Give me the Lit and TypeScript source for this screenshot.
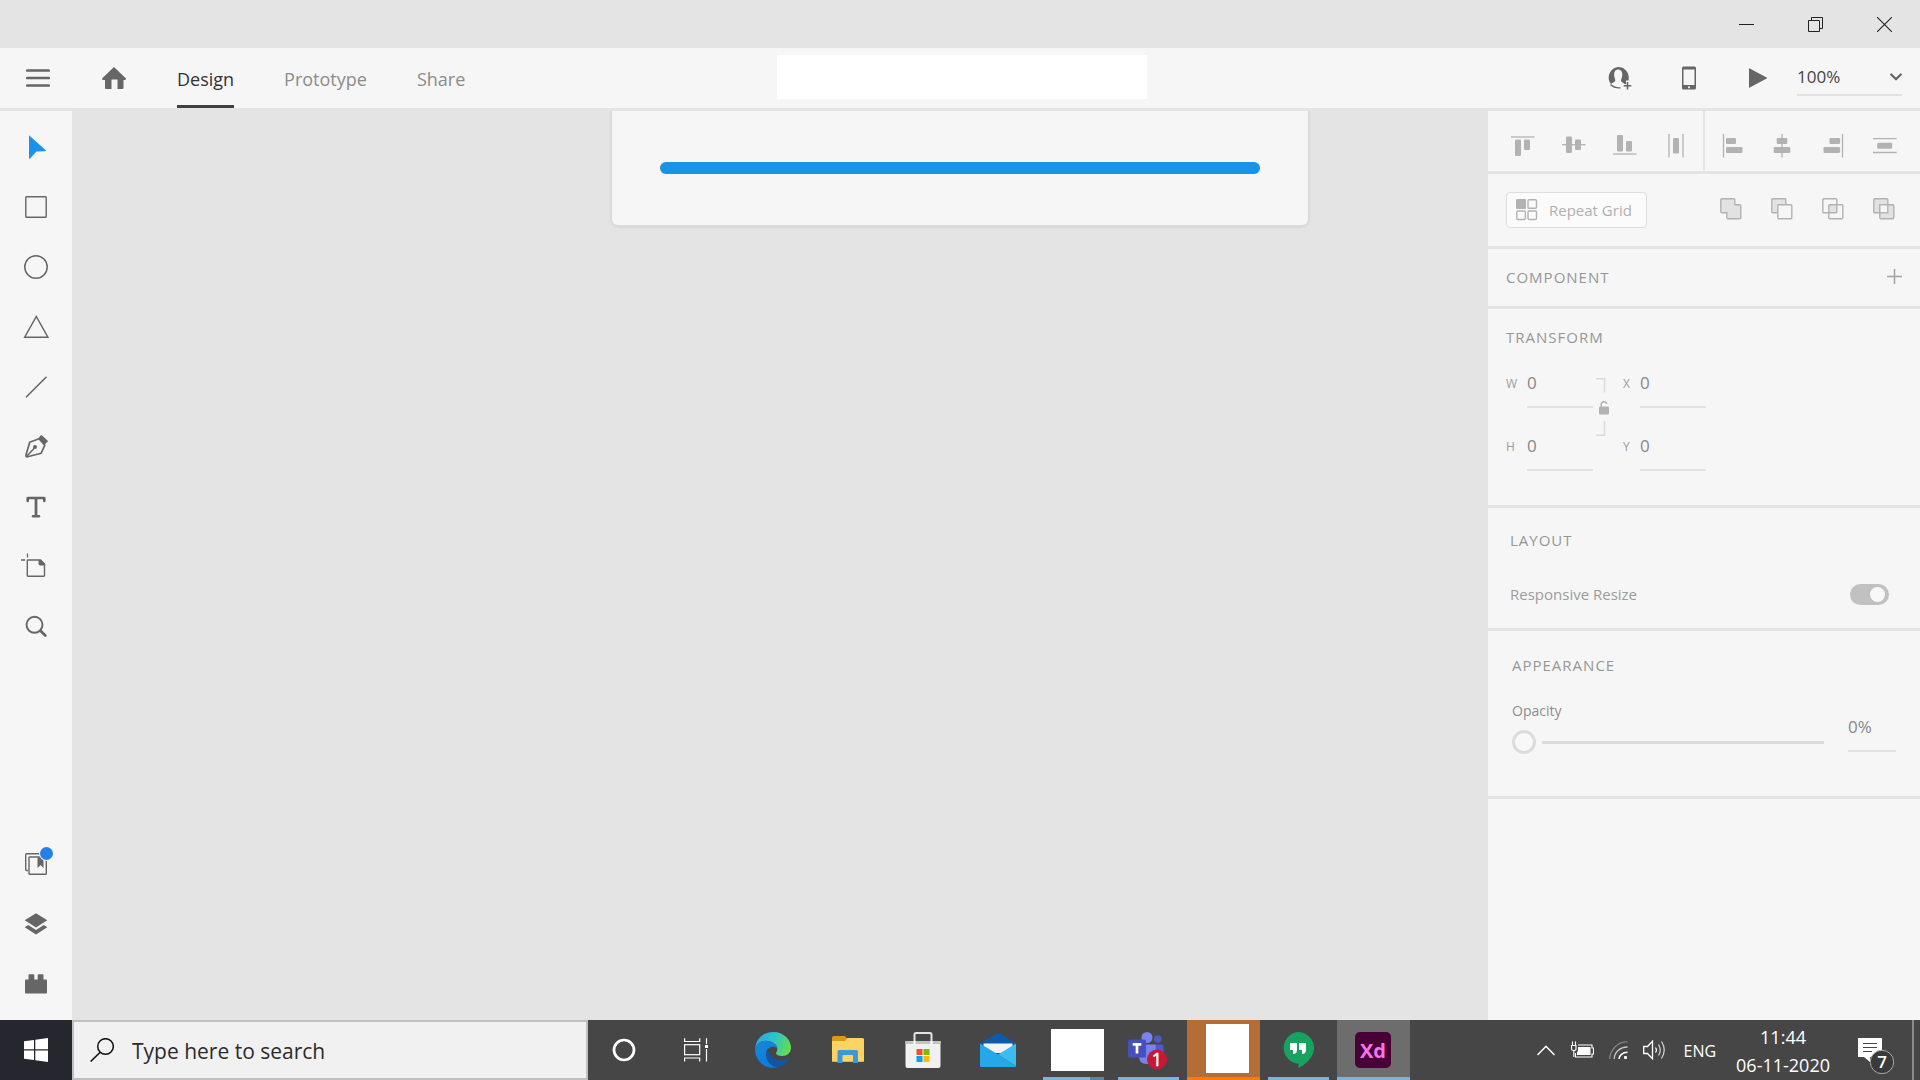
import { LitElement, html, css, svg, nothing } from "lit";
import type { TemplateResult, SVGTemplateResult } from "lit";
import { customElement, property, state } from "lit/decorators.js";
import { classMap } from "lit/directives/class-map.js";

const icon = (w: number, h: number, body: SVGTemplateResult): TemplateResult =>
  html`<svg width=${w} height=${h} viewBox="0 0 ${w} ${h}" fill="none" aria-hidden="true">${body}</svg>`;

const INK = "#666666";
const DIM = "#b2b2b2";

/* ---------- window and header ---------- */
const minimise = icon(15, 15, svg`<path d="M0 7.5H15" stroke="#222"/>`);
const restore = icon(15, 15, svg`<path d="M.5 3.5h11v11H.5zM3.500 3.500V.5h11v11h-3" stroke="#222"/>`);
const close = icon(15, 15, svg`<path d="M0 0L15 15M15 0L0 15" stroke="#222" stroke-width="1.1"/>`);
const menu = icon(24, 18, svg`<path d="M1.300 1.500H22.700M1.300 9H22.700M1.300 16.500H22.700" stroke=${INK} stroke-width="2.700" stroke-linecap="round"/>`);
const home = icon(24, 22, svg`<path d="M12 0L24 11.500Q24 13 22.500 13H21.500V21Q21.500 22 20.500 22H15.500V12.500H9.500V22H4Q3 22 3 21V13H1.500Q0 13 0 11.500Z" fill=${INK}/>`);
const invite = icon(26, 24, svg`
  <path d="M11 1A10.500 10.500 0 0 1 21.700 12V14.500H19V18H17.500C16 16.500 14 15.800 14 14.500C14 13 15.300 11.800 15.300 8.300C15.300 5.200 13.600 3.600 11.200 3.600S7.100 5.200 7.100 8.300C7.100 11.800 8.300 13 8.300 14.500C8.300 16 5.500 16.500 4 18A10.500 10.500 0 0 1 11 1Z" fill=${INK}/>
  <path d="M3.500 18.500Q7 22.200 13.500 21.800" stroke=${INK} stroke-width="1.300"/>
  <path d="M20.500 16V23.500M16.700 19.700H24.300" stroke=${INK} stroke-width="1.600"/>`);
const phone = icon(14, 24, svg`<path fill-rule="evenodd" d="M1.500 .5H12.500Q14 .5 14 2V22Q14 23.500 12.500 23.500H1.500Q0 23.500 0 22V2Q0 .5 1.500 .5ZM1.500 3.500V19H12.500V3.500ZM7 20.200A1.100 1.100 0 1 0 7 22.400A1.100 1.100 0 1 0 7 20.200Z" fill=${INK}/>`);
const play = icon(18, 20, svg`<path d="M0 .8Q0 0 .8 .4L17.600 9.500Q18.300 10 17.600 10.500L.8 19.600Q0 20 0 19.200Z" fill=${INK}/>`);
const chevron = icon(12, 8, svg`<path d="M1.300 1.500L6 6.200L10.700 1.500" stroke=${INK} stroke-width="2.300" stroke-linecap="round" stroke-linejoin="round"/>`);

/* ---------- tool rail ---------- */
const tools: [string, TemplateResult][] = [
  ["Select", icon(24, 24, svg`<path d="M5 .3L22 15.500Q22 16 21 16.200L12.500 16.500L6 23.600Q5 24.200 5 23.200Z" fill="#1a93e8"/>`)],
  ["Rectangle", icon(24, 24, svg`<rect x="1.800" y="1.800" width="20.400" height="20.400" rx=".8" stroke=${INK} stroke-width="1.400"/>`)],
  ["Ellipse", icon(24, 24, svg`<circle cx="12" cy="12" r="11.200" stroke=${INK} stroke-width="1.500"/>`)],
  ["Polygon", icon(26, 24, svg`<path d="M13.300 1.500L24.900 22.200H1.700Z" stroke=${INK} stroke-width="1.500"/>`)],
  ["Line", icon(22, 22, svg`<path d="M1.500 20.800L21 1.300" stroke=${INK} stroke-width="1.600" stroke-linecap="round"/>`)],
  ["Pen", icon(24, 24, svg`
    <path d="M5.700 7.200L15 3.700L20.800 10.200L17.200 18.200L3.500 21.800Q1.500 22 2 20Z" stroke=${INK} stroke-width="1.700" stroke-linejoin="round"/>
    <path d="M2.500 21.500L10.500 13" stroke=${INK} stroke-width="1.500"/>
    <circle cx="11" cy="12" r="2" fill=${INK}/>
    <path d="M14.300 3.500L16.500 .5Q17.200 -.2 18.100 .5L23.500 5.500Q24.200 6.300 23.300 7L20.500 9.800Z" fill=${INK}/>`)],
  ["Text", icon(20, 24, svg`<path d="M1.700 6V3H18.300V6" stroke=${INK} stroke-width="2.600" stroke-linecap="round" stroke-linejoin="round"/><path d="M10 3V21" stroke=${INK} stroke-width="2.800"/><path d="M7 21.300H13" stroke=${INK} stroke-width="2.400" stroke-linecap="round"/>`)],
  ["Artboard", icon(30, 28, svg`
    <path d="M7 7H19.500L23.500 11V22.500Q23.500 23.200 22.700 23.200H7Q6.300 23.200 6.300 22.500V7.700Q6.300 7 7 7Z" stroke=${INK} stroke-width="1.400"/>
    <path d="M17.500 7H20L24 11V12.500H19.500Q17.500 12.500 17.500 10.500Z" fill=${INK}/>
    <path d="M6.500 .5V4.500M0 7H4.200" stroke=${INK} stroke-width="1.300"/>`)],
  ["Zoom", icon(22, 24, svg`<circle cx="9.500" cy="9.800" r="8" stroke=${INK} stroke-width="1.900"/><path d="M15.500 15.700L20.300 20.500" stroke=${INK} stroke-width="2.700" stroke-linecap="round"/>`)],
];
const libraries = icon(24, 24, svg`
  <path d="M4 18.500H2.800Q1.700 18.500 1.700 17.500V2.500Q1.700 1.700 2.500 1.700H18.500" stroke=${INK} stroke-width="1.400"/>
  <rect x="5" y="5" width="17.300" height="17.300" rx=".8" stroke=${INK} stroke-width="1.400"/>
  <path d="M13.500 5.500H19.500V16L16.500 13L13.500 16Z" fill=${INK}/>`);
const layers = icon(24, 22, svg`
  <path d="M12 .3L23.300 7.300L12 14.400L.7 7.300Z" fill=${INK}/>
  <path d="M.7 14.200L4.200 12L12 16.900L19.800 12L23.300 14.200L12 21.500Z" fill=${INK}/>`);
const plugins = icon(22, 20, svg`<path d="M3.500 5.500V1Q3.500 .3 4.300 .3H8.500Q9.300 .3 9.300 1V5.500H12.700V1Q12.700 .3 13.500 .3H17.700Q18.500 .3 18.500 1V5.500H21Q22 5.500 22 6.500V18.500Q22 19.500 21 19.500H1Q0 19.500 0 18.500V6.500Q0 5.500 1 5.500Z" fill=${INK}/>`);

/* ---------- property panel ---------- */
const alignVertical: [string, TemplateResult][] = [
  ["Align top", icon(24, 24, svg`<path d="M0 3H23.500" stroke=${DIM} stroke-width="1.300"/><rect x="4" y="5.500" width="6" height="16.500" rx="1.300" fill=${DIM}/><rect x="13" y="5.500" width="6" height="10.500" rx="1.300" fill=${DIM}/>`)],
  ["Align middle", icon(24, 24, svg`<path d="M0 10.700H23.500" stroke=${DIM} stroke-width="1.300"/><rect x="4" y="2.500" width="6" height="16.500" rx="1.300" fill=${DIM}/><rect x="13" y="5.500" width="6" height="10.500" rx="1.300" fill=${DIM}/>`)],
  ["Align bottom", icon(24, 24, svg`<path d="M0 20H23.500" stroke=${DIM} stroke-width="1.300"/><rect x="4" y="1" width="6" height="16.500" rx="1.300" fill=${DIM}/><rect x="13" y="7" width="6" height="10.500" rx="1.300" fill=${DIM}/>`)],
  ["Distribute horizontally", icon(24, 24, svg`<path d="M5 0V23.500M19 0V23.500" stroke=${DIM} stroke-width="1.300"/><rect x="9" y="4" width="6" height="15.500" rx="1.300" fill=${DIM}/>`)],
];
const alignHorizontal: [string, TemplateResult][] = [
  ["Align left", icon(24, 24, svg`<path d="M3.500 0V23.500" stroke=${DIM} stroke-width="1.300"/><rect x="6" y="4" width="10" height="6" rx="1.300" fill=${DIM}/><rect x="6" y="13" width="16.500" height="6" rx="1.300" fill=${DIM}/>`)],
  ["Align centre", icon(24, 24, svg`<path d="M11 0V23.500" stroke=${DIM} stroke-width="1.300"/><rect x="5.700" y="4" width="10.600" height="6" rx="1.300" fill=${DIM}/><rect x="2.700" y="13" width="16.600" height="6" rx="1.300" fill=${DIM}/>`)],
  ["Align right", icon(24, 24, svg`<path d="M20.500 0V23.500" stroke=${DIM} stroke-width="1.300"/><rect x="7.500" y="4" width="10.600" height="6" rx="1.300" fill=${DIM}/><rect x="1.500" y="13" width="16.600" height="6" rx="1.300" fill=${DIM}/>`)],
  ["Distribute vertically", icon(24, 24, svg`<path d="M0 4.700H23.700M0 18.500H23.700" stroke=${DIM} stroke-width="1.300"/><rect x="4.200" y="8.700" width="15" height="6" rx="1.300" fill=${DIM}/>`)],
];
const SQ_A = svg`<rect x=".8" y=".8" width="14" height="14" rx="1"/>`;
const SQ_B = svg`<rect x="6.800" y="6.800" width="14" height="14" rx="1"/>`;
const booleans: [string, TemplateResult][] = [
  ["Add", icon(22, 22, svg`<path d="M1.800 .8H13.800Q14.800 .8 14.800 1.800V6.800H19.800Q20.800 6.800 20.800 7.800V19.800Q20.800 20.800 19.800 20.800H7.800Q6.800 20.800 6.800 19.800V14.800H1.800Q.8 14.800 .8 13.800V1.800Q.8 .8 1.800 .8Z" fill="#e2e2e2" stroke=${DIM} stroke-width="1.400"/>`)],
  ["Subtract", icon(22, 22, svg`<g stroke=${DIM} stroke-width="1.400"><g fill="#e2e2e2">${SQ_A}</g><g fill="#f6f6f6">${SQ_B}</g></g>`)],
  ["Intersect", icon(22, 22, svg`<rect x="6.800" y="6.800" width="8" height="8" fill="#e2e2e2"/><g stroke=${DIM} stroke-width="1.400">${SQ_A}${SQ_B}</g>`)],
  ["Exclude overlap", icon(22, 22, svg`<g stroke=${DIM} stroke-width="1.400" fill="#e2e2e2">${SQ_A}${SQ_B}<rect x="6.800" y="6.800" width="8" height="8" fill="#f6f6f6"/></g>`)],
];
const repeatGrid = icon(22, 22, svg`<rect width="10" height="10" rx="1" fill=${DIM}/><g stroke=${DIM} stroke-width="1.400"><rect x="12" y=".8" width="8.500" height="8.500" rx="1"/><rect x=".8" y="12" width="8.500" height="8.500" rx="1"/><rect x="12" y="12" width="8.500" height="8.500" rx="1"/></g>`);
const plus = icon(15, 15, svg`<path d="M7.500 0V15M0 7.500H15" stroke="#a2a2a2" stroke-width="1.500"/>`);
const lock = icon(14, 58, svg`
  <path d="M0 .8H8.500V14.500M0 57.200H8.500V43" stroke="#dcdcdc" stroke-width="1.500"/>
  <rect x="3" y="28.500" width="10" height="8" rx="1" fill="#b2b2b2"/>
  <path d="M5.200 29V26.500Q5.200 23.700 8 23.700Q10.500 23.700 10.800 26" stroke="#b2b2b2" stroke-width="1.400"/>`);

/* ---------- taskbar ---------- */
const windowsLogo = icon(24, 24, svg`<path d="M0 3.300L10 1.900V11.300H0ZM11.300 1.700L24 0V11.300H11.300ZM0 12.600H10V22.100L0 20.700ZM11.300 12.600H24V24L11.300 22.300Z" fill="#fff"/>`);
const magnifier = icon(24, 24, svg`<circle cx="15.500" cy="8.500" r="7.800" stroke="#111" stroke-width="1.500"/><path d="M10.200 14.200L.6 23.500" stroke="#111" stroke-width="1.600"/>`);
const cortana = icon(24, 24, svg`<circle cx="12" cy="12" r="10" stroke="#fff" stroke-width="2.700"/>`);
const taskView = icon(24, 24, svg`<g stroke="#fff" stroke-width="1.200"><path d="M.6 .3V3.500H15.700V.3M.6 23.500V20H15.700V23.500M22.500 .3V6M22.500 11V23.500"/><rect x=".6" y="6.700" width="15.100" height="10"/></g><rect x="21" y="7" width="3" height="3" fill="#fff"/>`);
const edge = icon(36, 36, svg`
  <defs>
    <linearGradient id="e1" x1="0" y1=".2" x2="1" y2=".5"><stop offset="0" stop-color="#27a9e8"/><stop offset=".5" stop-color="#2fc3c9"/><stop offset="1" stop-color="#62dc52"/></linearGradient>
    <linearGradient id="e2" x1="0" y1="0" x2=".6" y2="1"><stop offset="0" stop-color="#1a86d8"/><stop offset="1" stop-color="#0a7ddb"/></linearGradient>
  </defs>
  <path d="M.3 15.500C1.500 6 9 0 18 0C29 0 36 8 36 15.500C36 21 32 24 27.500 24C23.500 24 21 22.700 21 21.300C21 20.300 22.300 19.500 22.300 17C22.300 12.500 17 8.800 10.500 8.800C5.500 8.800 2 11.500 .3 15.500Z" fill="url(#e1)"/>
  <path d="M.3 15.500C2 11.500 5.500 8.800 10.500 8.800C17 8.800 22.300 12.500 22.300 16.500C20 13.500 13 14 11.500 20C10 27 15 34 22.500 35.400C10 38 -1.500 28 .3 15.500Z" fill="url(#e2)"/>
  <path d="M12.800 16.500C8.500 23 13 34 22.500 35.400C28 34 31.500 31 33.700 27.200C34 26.600 33.500 26.300 33 26.600C26 30.500 14 28 12.800 16.500Z" fill="#1155a5"/>`);
const explorer = icon(32, 28, svg`
  <path d="M0 2Q0 0 2 0H13L15.500 3H30Q32 3 32 5V26H0Z" fill="#d99b12"/>
  <path d="M0 5H13L15.500 2H30.500Q32 2 32 3.500V24Q32 25.500 30.500 25.500H1.500Q0 25.500 0 24Z" fill="#fdd464"/>
  <path d="M5.500 15.500Q5.500 14 7 14H24.500Q26 14 26 15.500V27H21V20Q21 19 20 19H11.500Q10.500 19 10.500 20V27H5.500Z" fill="#3f96d9"/>`);
const store = icon(36, 36, svg`
  <path d="M9.500 12V2.500Q9.500 1 11 1H25Q26.500 1 26.500 2.500V12" stroke="#e4e4e4" stroke-width="2"/>
  <path d="M.5 9H35.500V34Q35.500 36 33.500 36H2.500Q.5 36 .5 34Z" fill="#f1f1f1"/><path d="M.5 9H35.500V12H.5Z" fill="#c4c4c4"/>
  <path d="M9.500 9V12M26.500 9V12" stroke="#fff" stroke-width="2"/>
  <rect x="11.500" y="17" width="6" height="6" fill="#f25022"/><rect x="18.500" y="17" width="6" height="6" fill="#7fba00"/><rect x="11.500" y="24" width="6" height="6" fill="#00a4ef"/><rect x="18.500" y="24" width="6" height="6" fill="#ffb900"/>`);
const mail = icon(36, 34, svg`
  <path d="M0 10.500L16.500 .6Q18 -.2 19.500 .6L36 10.500L18 22Z" fill="#0b5cad"/>
  <path d="M3.500 10.500H32.500V20H3.500Z" fill="#f4f4f4"/>
  <path d="M0 10.500L18 21.500L36 33Q36 34 35 34H1.500Q0 34 0 32.500Z" fill="#25a8e8"/>
  <path d="M36 10.500L18 21.500L36 33Z" fill="#3dbcf2"/>`);
const teams = icon(40, 40, svg`
  <circle cx="19" cy="7.500" r="5.500" fill="#7b83eb"/><circle cx="29.800" cy="9" r="3.800" fill="#5059c9"/>
  <path d="M25 14.500H34Q35.500 14.500 35.500 16V24Q35 30 29 30L25 28Z" fill="#5059c9"/>
  <path d="M11 14.500H27.500V25Q27.500 34 19 34T11 25Z" fill="#7b83eb"/>
  <rect y="9.500" width="18" height="18" rx="1.500" fill="#4550bd"/>
  <path d="M4.700 14.300H13.300M9 14V23.500" stroke="#fff" stroke-width="2.700"/>
  <circle cx="29" cy="29.500" r="10" fill="#c8183a"/>
  <text x="29" y="36" text-anchor="middle" font-family="Open Sans, sans-serif" font-size="18" fill="#fff" stroke="#fff" stroke-width=".5">1</text>`);
const hangouts = icon(32, 36, svg`
  <path d="M16 0A16 16 0 0 1 32 16C32 24 25 32 16.500 36V31.500A15.800 15.800 0 0 1 16 0Z" fill="#17a35f"/>
  <path d="M8 11H15V18Q15 22 11 22V18H8ZM17 11H24V18Q24 22 20 22V18H17Z" fill="#fff"/>`);
const xd = icon(36, 36, svg`<rect width="36" height="36" rx="5" fill="#470137"/><text x="18" y="26" text-anchor="middle" font-family="Open Sans, sans-serif" font-size="20" font-weight="700" fill="#f573ee">Xd</text>`);
const trayUp = icon(18, 11, svg`<path d="M.5 10L9 1.300L17.500 10" stroke="#fff" stroke-width="1.500"/>`);
const battery = icon(24, 18, svg`
  <path d="M1.500 4.500H6V8Q6 9.500 3.800 9.500T1.500 8ZM2.500 4.500V.5M5.500 4.500V.5M3.800 9.500V16" stroke="#fff" stroke-width="1.100"/>
  <path d="M8 4H22V7H23.500V13H22V16H5.500V12" stroke="#fff" stroke-width="1.100"/><path d="M8 6H20.500V14H7V10.500H8Z" fill="#fff"/>`);
const wifi = icon(19, 18, svg`
  <path d="M.8 18C.8 9 8.500 .8 18.500 .8" stroke="#909090" stroke-width="1.100"/>
  <path d="M5.200 18C5.200 11.500 11 6 18.500 6" stroke="#c8c8c8" stroke-width="1.300"/>
  <path d="M10 18C10 14.500 13.500 11.300 18.500 11.300" stroke="#fff" stroke-width="1.500"/><rect x="15" y="15" width="3" height="3" rx="1" fill="#fff"/>`);
const volume = icon(24, 20, svg`
  <path d="M.7 6.500H4.500L9.500 1.200V18.800L4.500 13.500H.7Z" stroke="#fff" stroke-width="1.300"/>
  <path d="M12.500 7.500Q14.500 10 12.500 12.500" stroke="#fff" stroke-width="1.200"/><path d="M15.500 4.500Q19 10 15.500 15.500" stroke="#d8d8d8" stroke-width="1.200"/><path d="M18.500 1.500Q24 10 18.500 18.500" stroke="#d8d8d8" stroke-width="1.200"/>`);
const actionCentre = icon(36, 36, svg`
  <path d="M0 0H24V19H12V24L6 19H0Z" fill="#fff"/>
  <path d="M5 5.500H19M5 9.500H19M5 13.500H14" stroke="#464646" stroke-width="1.200"/>
  <circle cx="24" cy="24" r="11.700" fill="#3a3a3a" stroke="#aaa" stroke-width="1"/>
  <text x="24" y="30" text-anchor="middle" font-family="Open Sans, sans-serif" font-size="17" font-weight="600" fill="#fff">7</text>`);

const shared = css`
  * { box-sizing: border-box; }
  svg { display: block; flex: none; }
  button { display: flex; align-items: center; justify-content: center; margin: 0; padding: 0; border: 0; background: none; color: inherit; font: inherit; cursor: pointer; }
  input, select { margin: 0; padding: 0; border: 0; border-radius: 0; background: none; color: inherit; font: inherit; outline: none; }
`;

@customElement("app-header")
class AppHeader extends LitElement {
  @state() private tab = "Design";
  static styles = [shared, css`
    :host { display: block; }
    .title { display: flex; justify-content: flex-end; height: 48px; padding-right: 1px; background: #e4e4e4; }
    .win { width: 69px; height: 48px; }
    .bar { display: grid; grid-template-columns: 1fr 370px 1fr; height: 60px; padding: 0 18px 0 22px; background: #f6f6f6; }
    .left, .right { display: flex; align-items: center; }
    .left { gap: 44px; }
    .right { justify-content: flex-end; gap: 37px; }
    .tool { width: 32px; height: 32px; }
    .tabs { display: flex; gap: 50px; height: 60px; padding-left: 3px; }
    .tab { padding-top: 4px; border-bottom: 3px solid transparent; color: #8c8c8c; font-size: 18px; }
    .tab.on { border-bottom-color: #404040; color: #333; }
    .name { height: 44px; margin-top: 7px; background: #fff; }
    .zoom { display: grid; align-items: center; width: 105px; height: 36px; margin-left: -14px; border-bottom: 2px solid #e2e2e2; color: #444; font-size: 17px; }
    .zoom > * { grid-area: 1 / 1; }
    .zoom select { appearance: none; width: 100%; height: 34px; padding-bottom: 2px; }
    .caret { justify-self: end; pointer-events: none; }
  `];
  render() {
    return html`
      <div class="title">
        <button class="win" aria-label="Minimise">${minimise}</button>
        <button class="win" aria-label="Restore">${restore}</button>
        <button class="win" aria-label="Close">${close}</button>
      </div>
      <header class="bar">
        <div class="left">
          <button class="tool" aria-label="Menu">${menu}</button>
          <button class="tool" aria-label="Home">${home}</button>
          <nav class="tabs">
            ${["Design", "Prototype", "Share"].map(t => html`<button class=${classMap({ tab: true, on: t === this.tab })} @click=${() => (this.tab = t)}>${t}</button>`)}
          </nav>
        </div>
        <div class="name"></div>
        <div class="right">
          <button class="tool" aria-label="Invite">${invite}</button>
          <button class="tool" aria-label="Device preview">${phone}</button>
          <button class="tool" aria-label="Play">${play}</button>
          <div class="zoom">
            <select aria-label="Zoom level"><option>100%</option><option>50%</option><option>200%</option></select>
            <span class="caret">${chevron}</span>
          </div>
        </div>
      </header>`;
  }
}

@customElement("tool-rail")
class ToolRail extends LitElement {
  static styles = [shared, css`
    :host { display: flex; flex-direction: column; justify-content: space-between; padding: 6px 0; background: #f6f6f6; }
    .tool { position: relative; width: 100%; height: 60px; }
    .dot { position: absolute; left: 40px; top: 13px; width: 13px; height: 13px; border-radius: 50%; background: #2680eb; box-shadow: 0 0 0 1px #f6f6f6; }
  `];
  render() {
    return html`
      <div>${tools.map(([n, i]) => html`<button class="tool" aria-label=${n}>${i}</button>`)}</div>
      <div>
        <button class="tool" aria-label="Libraries">${libraries}<span class="dot"></span></button>
        <button class="tool" aria-label="Layers">${layers}</button>
        <button class="tool" aria-label="Plugins">${plugins}</button>
      </div>`;
  }
}

@customElement("property-panel")
class PropertyPanel extends LitElement {
  static styles = [shared, css`
    :host { display: block; background: #f6f6f6; color: #999; font-size: 15px; }
    section { border-bottom: 3px solid #e4e4e4; }
    h2 { margin: 0; font-size: 15px; line-height: 20px; font-weight: 400; letter-spacing: 1px; color: #969696; }
    .align { display: grid; grid-template-columns: 215px 1fr; height: 63px; }
    .group { display: flex; align-items: center; gap: 27px; padding: 10px 0 0 23px; }
    .group + .group { padding-left: 15px; border-left: 2px solid #e4e4e4; }
    .combine { display: flex; align-items: center; justify-content: space-between; height: 75px; padding: 0 25px 0 18px; }
    .repeat { gap: 11px; height: 36px; padding: 0 14px 0 9px; border: 1px solid #dedede; border-radius: 4px; background: #fbfbfb; color: #b0b0b0; }
    .ops { display: flex; gap: 29px; padding-bottom: 3px; }
    .component { display: flex; align-items: center; justify-content: space-between; height: 60px; padding: 0 18px 2px; }
    .transform { padding: 18px 18px 34px; }
    .fields { display: grid; grid-template-columns: 21px 66px 30px 17px 66px; row-gap: 21px; margin-top: 19px; }
    .fields label { font-size: 12px; line-height: 36px; color: #9c9c9c; }
    .value { width: 100%; height: 42px; padding-bottom: 8px; border-bottom: 2px solid #e2e2e2; color: #888; font-size: 17px; }
    .lock { grid-area: 1 / 3 / 3 / 4; place-self: start; margin: 12px 0 0 3px; }
    .layout { padding: 22px 31px 22px 22px; }
    .row { display: flex; align-items: center; justify-content: space-between; height: 24px; margin-top: 32px; color: #9c9c9c; }
    .switch { appearance: none; display: flex; justify-content: flex-end; width: 39px; height: 21px; padding: 3px 4px; border-radius: 11px; background: #c1c1c1; }
    .switch::before { content: ""; width: 15px; height: 15px; border-radius: 50%; background: #f8f8f8; }
    .switch:not(:checked) { justify-content: flex-start; }
    .appearance { padding: 24px 24px 42px; }
    .opacity { display: grid; grid-template-columns: 1fr 48px; column-gap: 24px; align-items: end; margin-top: 26px; }
    .opacity label { display: block; margin-bottom: 9px; font-size: 14px; line-height: 20px; color: #8e8e8e; }
    .opacity .value { margin-bottom: 2px; }
    .slider { appearance: none; display: block; width: 100%; height: 24px; }
    .slider::-webkit-slider-runnable-track { height: 24px; background: linear-gradient(#dcdcdc, #dcdcdc) right center / calc(100% - 30px) 3px no-repeat; }
    .slider::-webkit-slider-thumb { appearance: none; width: 24px; height: 24px; border: 3px solid #dcdcdc; border-radius: 50%; background: #f8f8f8; }
  `];
  render() {
    const buttons = (list: [string, TemplateResult][]) => list.map(([n, i]) => html`<button aria-label=${n}>${i}</button>`);
    return html`
      <section class="align"><div class="group">${buttons(alignVertical)}</div><div class="group">${buttons(alignHorizontal)}</div></section>
      <section class="combine">
        <button class="repeat">${repeatGrid}Repeat Grid</button>
        <div class="ops">${buttons(booleans)}</div>
      </section>
      <section class="component"><h2>COMPONENT</h2><button aria-label="Make component">${plus}</button></section>
      <section class="transform">
        <h2>TRANSFORM</h2>
        <div class="fields">
          <label for="w">W</label><input class="value" id="w" value="0">
          <button class="lock" aria-label="Lock aspect">${lock}</button>
          <label for="x">X</label><input class="value" id="x" value="0">
          <label for="h">H</label><input class="value" id="h" value="0">
          <label for="y">Y</label><input class="value" id="y" value="0">
        </div>
      </section>
      <section class="layout">
        <h2>LAYOUT</h2>
        <div class="row"><label for="resize">Responsive Resize</label><input class="switch" id="resize" type="checkbox" checked></div>
      </section>
      <section class="appearance">
        <h2>APPEARANCE</h2>
        <div class="opacity">
          <div><label for="opacity">Opacity</label><input class="slider" id="opacity" type="range" min="0" max="100" value="0"></div>
          <input class="value" aria-label="Opacity value" value="0%">
        </div>
      </section>`;
  }
}

interface Task { name: string; art?: TemplateResult; wide?: boolean; state?: string; }
const tasks: Task[] = [
  { name: "Edge", art: edge },
  { name: "File Explorer", art: explorer },
  { name: "Store", art: store },
  { name: "Mail", art: mail },
  { name: "Window group", wide: true, state: "open stacked" },
  { name: "Teams", art: teams, state: "open" },
  { name: "Window", state: "alert" },
  { name: "Hangouts", art: hangouts, state: "open" },
  { name: "Xd", art: xd, state: "active" },
];

@customElement("task-bar")
class TaskBar extends LitElement {
  @property() time = "11:44";
  @property() date = "06-11-2020";
  static styles = [shared, css`
    :host { display: flex; height: 60px; background: #464646; color: #fff; }
    .start { width: 72px; background: #26262e; }
    .search { display: flex; align-items: center; gap: 18px; width: 516px; padding: 0 16px; border: 2px solid #c0c0c0; background: #f1f1f1; color: #2b2b2b; font-size: 21px; }
    .search input { flex: 1; min-width: 0; padding-top: 2px; }
    .search input::placeholder { color: #2b2b2b; opacity: 1; }
    .sys { width: 72px; }
    .tasks { display: flex; gap: 2px; padding-left: 5px; }
    .task { display: grid; grid-template: 57px 3px / 73px; place-items: center; }
    .task .face { display: grid; place-items: center; justify-self: start; width: 72px; height: 57px; padding-top: 3px; }
    .blank { width: 43px; height: 49px; margin-left: 9px; background: #fff; }
    .alert .face { padding-top: 0; }
    .blank.wide { width: 53px; height: 42px; }
    .line { width: 61px; height: 3px; }
    .open .line { background: #76b4e4; }
    .stacked .line { background: linear-gradient(90deg, #76b4e4 47px, #5188ae 47px); }
    .alert { background: #b46d35; }
    .alert .line { width: 100%; background: #ff7a00; }
    .active { background: #6d6d6d; }
    .active .line { width: 100%; background: #76b4e4; }
    .tray { display: flex; align-items: center; margin-left: auto; }
    .icons { display: flex; align-items: center; gap: 15px; }
    .lang { margin: 0 20px 0 17px; padding-top: 2px; font-size: 16px; }
    .clock { flex-direction: column; padding-top: 1px; font-size: 18px; line-height: 28px; }
    .notes { margin: 12px 18px 0 28px; }
    .desk { width: 8px; height: 60px; border-left: 2px solid #8a8a8a; }
  `];
  render() {
    return html`
      <button class="start" aria-label="Start">${windowsLogo}</button>
      <label class="search">${magnifier}<input type="text" aria-label="Search" placeholder="Type here to search"></label>
      <button class="sys" aria-label="Cortana">${cortana}</button>
      <button class="sys" aria-label="Task view">${taskView}</button>
      <div class="tasks">
        ${tasks.map(t => html`<button class="task ${t.state ?? ""}" aria-label=${t.name}>
          <span class="face">${t.art ?? html`<span class=${classMap({ blank: true, wide: !!t.wide })}></span>`}</span>
          ${t.state ? html`<span class="line"></span>` : nothing}
        </button>`)}
      </div>
      <div class="tray">
        <div class="icons">
          <button aria-label="Hidden icons">${trayUp}</button>
          <button aria-label="Battery">${battery}</button>
          <button aria-label="Network">${wifi}</button>
          <button aria-label="Volume">${volume}</button>
        </div>
        <button class="lang">ENG</button>
        <button class="clock"><span>${this.time}</span><span>${this.date}</span></button>
        <button class="notes" aria-label="Notifications">${actionCentre}</button>
        <button class="desk" aria-label="Show desktop"></button>
      </div>`;
  }
}

@customElement("app-root")
class AppRoot extends LitElement {
  static styles = [shared, css`
    :host { display: flex; flex-direction: column; min-height: 100vh; background: #e4e4e4; font-family: "Open Sans", "Noto Sans", sans-serif; }
    .work { flex: 1; display: grid; grid-template-columns: 72px 1fr 432px; margin-top: 3px; }
    .rail { grid-area: 1 / 1; }
    .panel { grid-area: 1 / 3; }
    .loading { grid-area: 1 / 1 / 2 / 4; place-self: start center; width: 696px; padding: 51px 48px; border-radius: 0 0 6px 6px; background: #f6f6f6; box-shadow: 0 1px 2px 2px #dadada; clip-path: inset(0 -6px -8px -6px); }
    progress { appearance: none; display: block; width: 100%; height: 12px; border: 0; }
    progress::-webkit-progress-bar { border-radius: 6px; background: #ddd; }
    progress::-webkit-progress-value { border-radius: 6px; background: #1893e8; }
  `];
  render() {
    return html`
      <app-header></app-header>
      <main class="work">
        <tool-rail class="rail"></tool-rail>
        <div class="loading"><progress aria-label="Loading" max="100" value="100"></progress></div>
        <property-panel class="panel"></property-panel>
      </main>
      <task-bar></task-bar>`;
  }
}
